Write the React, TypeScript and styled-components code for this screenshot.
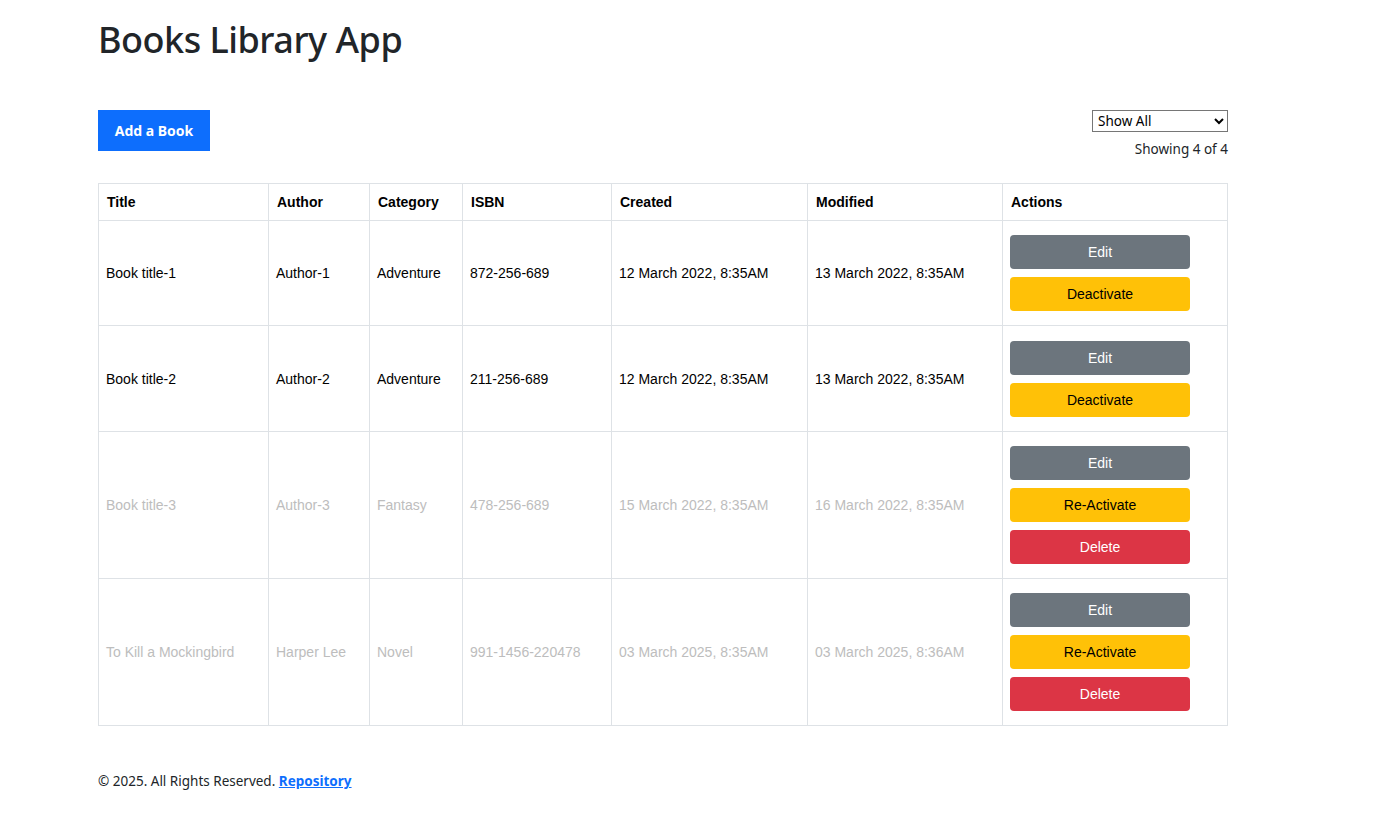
import React from "react";
import styled, { createGlobalStyle } from "styled-components";

const GlobalStyle = createGlobalStyle`
  * { box-sizing: border-box; }
  body {
    margin: 0;
    font-family: "Noto Sans", "Open Sans", sans-serif;
    color: #212529;
    background: #fff;
  }
`;

const Page = styled.div`
  width: 1130px;
  margin-left: 98px;
  padding-top: 18px;
`;

const Title = styled.h1`
  margin: 0 0 49px 0;
  font-size: 36px;
  font-weight: 500;
  letter-spacing: -0.5px;
  line-height: 1.2;
  color: #212529;
`;

const Toolbar = styled.div`
  display: flex;
  justify-content: space-between;
  align-items: flex-start;
  margin-bottom: 25px;
`;

const PrimaryButton = styled.button`
  background: #0d6efd;
  color: #fff;
  border: none;
  border-radius: 0;
  width: 112px;
  height: 41px;
  font-family: "Noto Sans", sans-serif;
  font-size: 14px;
  font-weight: 700;
  cursor: pointer;
`;

const FilterBox = styled.div`
  display: flex;
  flex-direction: column;
  align-items: flex-end;
  gap: 8px;
`;

const Select = styled.select`
  width: 136px;
  height: 22px;
  font-family: "Noto Sans", sans-serif;
  font-size: 13.5px;
  border: 1px solid #767676;
  border-radius: 0;
  background: #fff;
  color: #000;
  padding: 0 1px;
`;

const Count = styled.div`
  font-size: 13.5px;
  color: #212529;
`;

const Table = styled.table`
  width: 1130px;
  table-layout: fixed;
  border-collapse: collapse;
  font-family: "Liberation Sans", Arial, sans-serif;
  font-size: 14px;
  color: #000;
`;

const Th = styled.th<{ $w: number }>`
  width: ${(p) => p.$w}px;
  text-align: left;
  font-weight: 700;
  border: 1px solid #dee2e6;
  padding: 8px;
  height: 37px;
`;

const Td = styled.td<{ $inactive?: boolean }>`
  border: 1px solid #dee2e6;
  padding: 8px 8px 8px 7px;
  vertical-align: middle;
  color: ${(p) => (p.$inactive ? "#bdbdbd" : "#000")};
`;

const ActionCell = styled.td`
  border: 1px solid #dee2e6;
  padding: 14.15px 8px 14.15px 7px;
  vertical-align: middle;
`;

const ActionStack = styled.div`
  display: flex;
  flex-direction: column;
  gap: 8px;
`;

const variants = {
  secondary: { bg: "#6c757d", fg: "#fff" },
  warning: { bg: "#ffc107", fg: "#000" },
  danger: { bg: "#dc3545", fg: "#fff" },
};

const ActionButton = styled.button<{ $variant: keyof typeof variants }>`
  width: 180px;
  height: 34px;
  border: none;
  border-radius: 4px;
  background: ${(p) => variants[p.$variant].bg};
  color: ${(p) => variants[p.$variant].fg};
  font-family: "Liberation Sans", Arial, sans-serif;
  font-size: 14px;
  cursor: pointer;
`;

const Footer = styled.footer`
  margin-top: 46px;
  font-size: 13.5px;
  color: #212529;
`;

const RepoLink = styled.a`
  color: #0d6efd;
  font-weight: 700;
  text-decoration: underline;
`;

type Book = {
  title: string;
  author: string;
  category: string;
  isbn: string;
  created: string;
  modified: string;
  active: boolean;
};

const books: Book[] = [
  { title: "Book title-1", author: "Author-1", category: "Adventure", isbn: "872-256-689", created: "12 March 2022, 8:35AM", modified: "13 March 2022, 8:35AM", active: true },
  { title: "Book title-2", author: "Author-2", category: "Adventure", isbn: "211-256-689", created: "12 March 2022, 8:35AM", modified: "13 March 2022, 8:35AM", active: true },
  { title: "Book title-3", author: "Author-3", category: "Fantasy", isbn: "478-256-689", created: "15 March 2022, 8:35AM", modified: "16 March 2022, 8:35AM", active: false },
  { title: "To Kill a Mockingbird", author: "Harper Lee", category: "Novel", isbn: "991-1456-220478", created: "03 March 2025, 8:35AM", modified: "03 March 2025, 8:36AM", active: false },
];

const columns: [string, number][] = [
  ["Title", 170],
  ["Author", 101],
  ["Category", 93],
  ["ISBN", 149],
  ["Created", 196],
  ["Modified", 195],
  ["Actions", 225],
];

export default function App() {
  return (
    <>
      <GlobalStyle />
      <Page>
        <Title>Books Library App</Title>
        <Toolbar>
          <PrimaryButton>Add a Book</PrimaryButton>
          <FilterBox>
            <Select defaultValue="all">
              <option value="all">Show All</option>
              <option value="active">Active</option>
              <option value="inactive">Inactive</option>
            </Select>
            <Count>Showing 4 of 4</Count>
          </FilterBox>
        </Toolbar>
        <Table>
          <thead>
            <tr>
              {columns.map(([c, w]) => (
                <Th key={c} $w={w}>{c}</Th>
              ))}
            </tr>
          </thead>
          <tbody>
            {books.map((b) => (
              <tr key={b.title}>
                <Td $inactive={!b.active}>{b.title}</Td>
                <Td $inactive={!b.active}>{b.author}</Td>
                <Td $inactive={!b.active}>{b.category}</Td>
                <Td $inactive={!b.active}>{b.isbn}</Td>
                <Td $inactive={!b.active}>{b.created}</Td>
                <Td $inactive={!b.active}>{b.modified}</Td>
                <ActionCell>
                  <ActionStack>
                    <ActionButton $variant="secondary">Edit</ActionButton>
                    <ActionButton $variant="warning">{b.active ? "Deactivate" : "Re-Activate"}</ActionButton>
                    {!b.active && <ActionButton $variant="danger">Delete</ActionButton>}
                  </ActionStack>
                </ActionCell>
              </tr>
            ))}
          </tbody>
        </Table>
        <Footer>
          © 2025. All Rights Reserved. <RepoLink href="#">Repository</RepoLink>
        </Footer>
      </Page>
    </>
  );
}
